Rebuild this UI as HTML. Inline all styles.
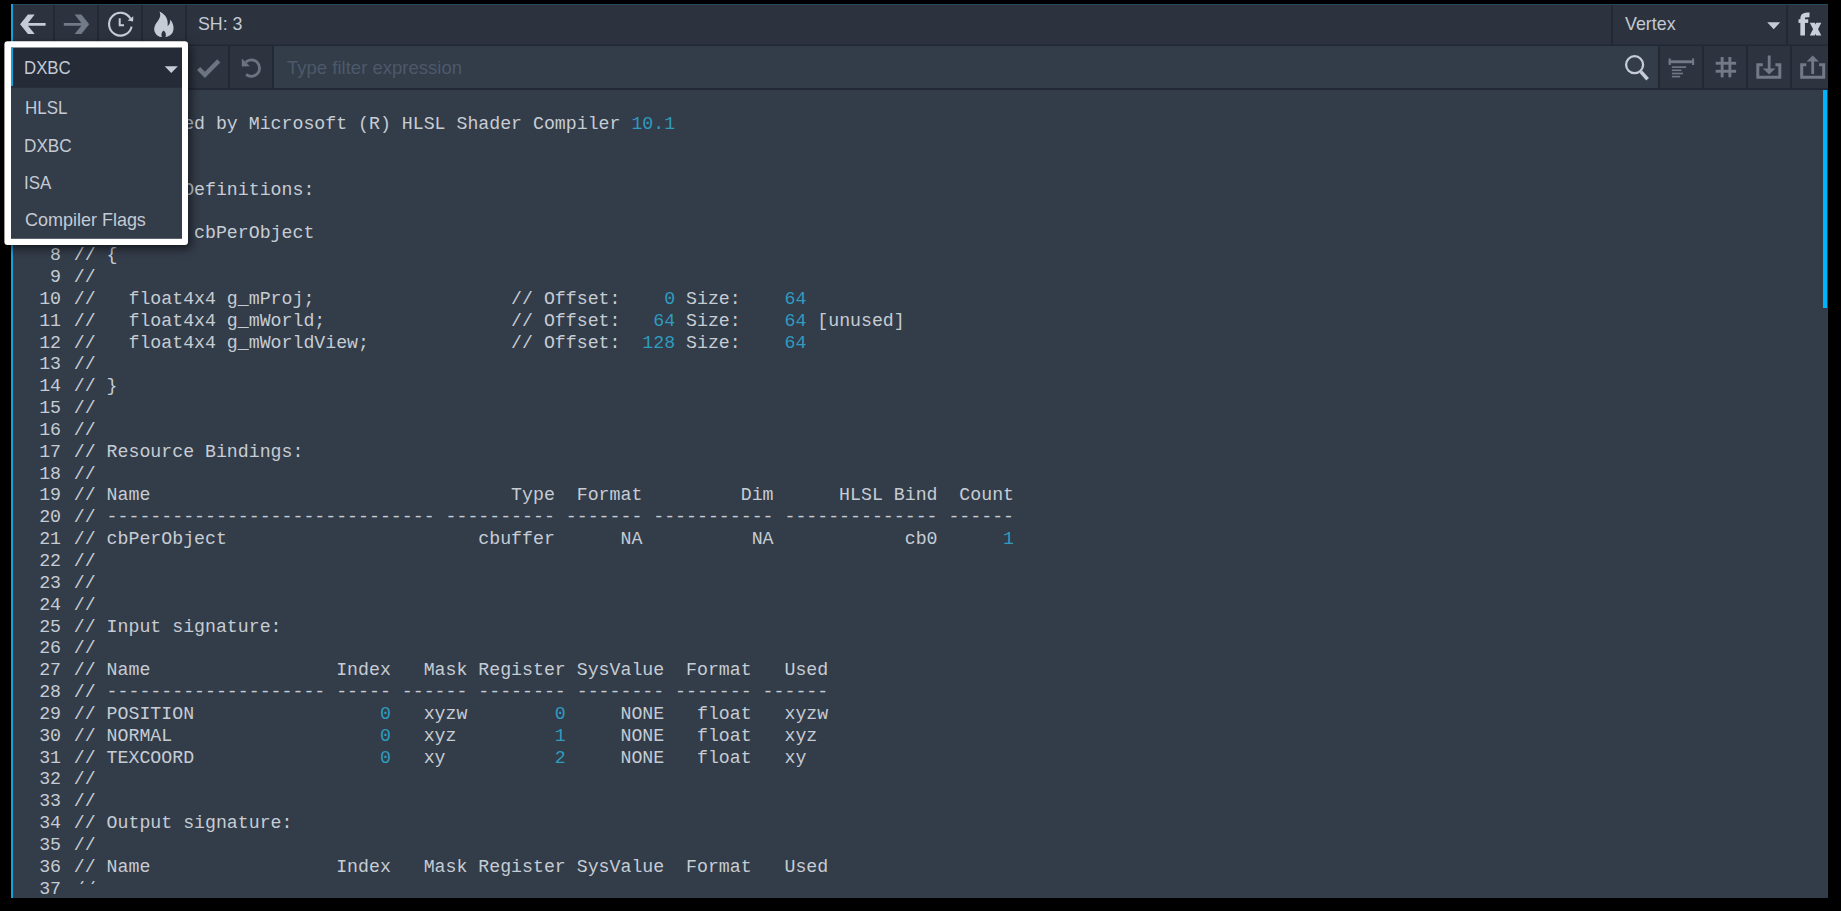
<!DOCTYPE html>
<html><head><meta charset="utf-8"><title>Shader View</title>
<style>
html,body{margin:0;padding:0;background:#000;}
body{width:1841px;height:911px;position:relative;overflow:hidden;font-family:"Liberation Sans",sans-serif;}
.abs{position:absolute;}
#app{left:11px;top:4px;width:1817px;height:894px;background:#333c49;}
#row1{left:11px;top:4px;width:1817px;height:41px;background:#2c333f;border-top:1px solid #24495c;box-sizing:border-box;}
#row1t{left:11px;top:5px;width:1817px;height:1px;background:#302f3a;}
#row1c{left:11px;top:44px;width:1817px;height:1px;background:#272d38;}
#row1b{left:11px;top:45px;width:1817px;height:1px;background:#222934;}
#row2{left:11px;top:46px;width:1817px;height:42px;background:#2d3440;}
#filter{left:274px;top:46px;width:1384px;height:42px;background:#333c49;}
#row2b{left:11px;top:88px;width:1817px;height:2px;background:#232a35;}
.sep{position:absolute;width:2px;background:#222934;}
.s1{top:5px;height:40px;}
.s2{top:46px;height:42px;}
.ui{position:absolute;color:#c3cad4;font-size:19px;line-height:22px;white-space:pre;transform-origin:0 50%;}
#code{left:11px;top:90px;width:1817px;height:808px;background:#333c49;overflow:hidden;}
pre{margin:0;font-family:"Liberation Mono",monospace;font-size:18.23px;line-height:21.85px;color:#c6ccd4;position:absolute;}
#nums{left:0;width:50px;text-align:right;top:2.3px;}
#src{left:62.8px;top:2.3px;}
#src i{font-style:normal;color:#2f9bbf;}
#hcover{left:60px;top:794px;width:1757px;height:14px;background:#333c49;}
#vscroll{left:1812px;top:0;width:4px;height:218px;background:#00b4fc;}
#stripe{left:11px;top:4px;width:2px;height:894px;background:#18a0dc;}
#shadow{left:5px;top:43px;width:182px;height:201px;border-radius:3px;box-shadow:2px 3px 8px 2px rgba(0,0,0,0.55);}
#icons{left:0;top:0;}
</style></head><body>
<div id="app" class="abs"></div>
<div id="code" class="abs">
  <pre id="nums">1
2
3
4
5
6
7
8
9
10
11
12
13
14
15
16
17
18
19
20
21
22
23
24
25
26
27
28
29
30
31
32
33
34
35
36
37</pre>
  <pre id="src">//
// Generated by Microsoft (R) HLSL Shader Compiler <i>10.1</i>
//
//
// Buffer Definitions: 
//
// cbuffer cbPerObject
// {
//
//   float4x4 g_mProj;                  // Offset:    <i>0</i> Size:    <i>64</i>
//   float4x4 g_mWorld;                 // Offset:   <i>64</i> Size:    <i>64</i> [unused]
//   float4x4 g_mWorldView;             // Offset:  <i>128</i> Size:    <i>64</i>
//
// }
//
//
// Resource Bindings:
//
// Name                                 Type  Format         Dim      HLSL Bind  Count
// ------------------------------ ---------- ------- ----------- -------------- ------
// cbPerObject                       cbuffer      NA          NA            cb0      <i>1</i>
//
//
//
// Input signature:
//
// Name                 Index   Mask Register SysValue  Format   Used
// -------------------- ----- ------ -------- -------- ------- ------
// POSITION                 <i>0</i>   xyzw        <i>0</i>     NONE   float   xyzw
// NORMAL                   <i>0</i>   xyz         <i>1</i>     NONE   float   xyz
// TEXCOORD                 <i>0</i>   xy          <i>2</i>     NONE   float   xy
//
//
// Output signature:
//
// Name                 Index   Mask Register SysValue  Format   Used
//</pre>
  <div id="hcover" class="abs"></div>
  <div id="vscroll" class="abs"></div>
</div>
<div id="row1" class="abs"></div>
<div id="row1t" class="abs"></div>
<div id="row1c" class="abs"></div>
<div id="row1b" class="abs"></div>
<div id="row2" class="abs"></div>
<div id="filter" class="abs"></div>
<div id="row2b" class="abs"></div>
<div class="sep s1" style="left:53px"></div>
<div class="sep s1" style="left:97px"></div>
<div class="sep s1" style="left:141px"></div>
<div class="sep s1" style="left:185px"></div>
<div class="sep s1" style="left:1611px"></div>
<div class="sep s1" style="left:1786px"></div>
<div class="sep s2" style="left:228px"></div>
<div class="sep s2" style="left:272px"></div>
<div class="sep s2" style="left:1658px"></div>
<div class="sep s2" style="left:1702px"></div>
<div class="sep s2" style="left:1746px"></div>
<div class="sep s2" style="left:1790px"></div>
<div id="stripe" class="abs"></div>
<div class="ui" id="t_sh" style="left:198.2px;top:13px;transform:scaleX(0.937);">SH: 3</div>
<div class="ui" id="t_vertex" style="left:1625.4px;top:13px;transform:scaleX(0.939);">Vertex</div>
<div class="ui" id="t_filter" style="left:287px;top:57px;transform:scaleX(0.975);color:#4d596a;">Type filter expression</div>
<div id="shadow" class="abs"></div>
<svg id="popup" class="abs" style="left:0;top:0" width="200" height="260" viewBox="0 0 200 260">
<rect x="4.4" y="41.3" width="183.6" height="203.7" rx="3.2" fill="#fff"/>
<rect x="11" y="47.7" width="171" height="191.1" fill="#333c49"/>
<rect x="11" y="47.7" width="171" height="40" fill="#252b37"/>
<rect x="11" y="47.7" width="2" height="38.4" fill="#18a0dc"/>
</svg>
<div class="ui" id="t_dxbc" style="left:23.8px;top:56.5px;transform:scaleX(0.885);">DXBC</div>
<div class="ui" id="t_hlsl" style="left:24.5px;top:97px;transform:scaleX(0.893);">HLSL</div>
<div class="ui" id="t_dxbc2" style="left:24.3px;top:134.5px;transform:scaleX(0.903);">DXBC</div>
<div class="ui" id="t_isa" style="left:24.3px;top:172px;transform:scaleX(0.893);">ISA</div>
<div class="ui" id="t_cf" style="left:24.5px;top:209.3px;transform:scaleX(0.946);">Compiler Flags</div>
<svg id="icons" class="abs" width="1841" height="911" viewBox="0 0 1841 911">
<g fill="#c5ccd6">
<!-- back arrow -->
<path d="M20.1 24.3 L27.9 14.6 L34.7 14.6 L28.0 22.9 L45.6 22.9 L45.6 25.7 L28.0 25.7 L34.7 34.1 L27.9 34.1 Z"/>
<!-- flame -->
<path d="M159.5 11.6 C166 14.5 168.5 20 167.6 26.2 C169.6 24.8 170.4 22.4 170.2 19.6 C173.4 23.2 174.6 28.6 172.6 32.6 C171.2 35.2 168.6 36.8 165.4 37.1 C166.6 34.6 165.6 32 163.6 30.6 C161.6 32 160.8 34.6 162 37.1 C158.4 36.8 155.6 34.6 154.6 31.4 C153.4 27.4 155.6 23.6 158.2 20.4 C160.2 17.8 161 15 159.5 11.6 Z"/>
<!-- dropdown triangles -->
<path d="M164.7 66.2 L177.8 66.2 L171.25 73 Z"/>
<path d="M1767.2 22.2 L1780.2 22.2 L1773.7 29.2 Z"/>
</g>
<!-- forward arrow -->
<path fill="#727a87" d="M89.2 24.3 L81.4 14.6 L74.6 14.6 L81.3 22.9 L63.8 22.9 L63.8 25.7 L81.3 25.7 L74.6 34.1 L81.4 34.1 Z"/>
<!-- clock -->
<g fill="none" stroke="#c5ccd6" stroke-width="2.1">
<path d="M131.6 26.6 A11.4 11.4 0 1 1 130.4 18.6"/>
<path d="M119.7 18.2 L119.7 25.2 L124 25.2" stroke-width="2"/>
</g>
<path fill="#c5ccd6" d="M133.3 16.2 L133.1 21.4 L127.6 20.5 Z"/>
<!-- check -->
<path fill="none" stroke="#6c7481" stroke-width="4.4" d="M198.6 68.5 L204.9 74.9 L218.8 60.9"/>
<!-- undo -->
<path fill="none" stroke="#6c7481" stroke-width="2.8" d="M245.8 62.1 A8.2 8.2 0 1 1 246.1 74.4"/>
<path fill="#6c7481" d="M241.8 58.6 L249.9 66.3 L241.8 66.6 Z"/>
<!-- search -->
<circle cx="1634.6" cy="64.7" r="8.5" fill="none" stroke="#c5ccd6" stroke-width="2.3"/>
<path d="M1640.8 71.6 L1647.6 79.2" stroke="#c5ccd6" stroke-width="3.6" fill="none"/>
<!-- format -->
<g fill="#727a87">
<rect x="1668.7" y="60.3" width="25.4" height="2.9"/>
<rect x="1668.7" y="58.4" width="2" height="6.6"/>
<rect x="1692.1" y="58.4" width="2" height="6.6"/>
<rect x="1671.9" y="66.3" width="14.2" height="1.6"/>
<rect x="1671.9" y="69.5" width="9.5" height="1.6"/>
<rect x="1671.9" y="72.7" width="11.1" height="1.6"/>
<rect x="1671.9" y="75.8" width="8.2" height="1.6"/>
<!-- hash -->
<rect x="1720.7" y="57" width="2.9" height="20.3"/>
<rect x="1728.4" y="57" width="2.9" height="20.3"/>
<rect x="1715.7" y="61.8" width="20.4" height="2.9"/>
<rect x="1715.7" y="69.8" width="20.4" height="2.9"/>
<!-- download -->
<path d="M1756.3 63.3 H1762.8 V66.3 H1759.3 V75.8 H1778.3 V66.3 H1775.4 V63.3 H1781.3 V78.8 H1756.3 Z"/>
<rect x="1767.8" y="55.5" width="2.8" height="14"/>
<path d="M1762.8 68.5 H1775.4 L1769.1 74.4 Z"/>
<!-- upload -->
<path d="M1800.2 63.3 H1806.3 V66.3 H1803.2 V75.8 H1822.2 V66.3 H1819.1 V63.3 H1825.2 V78.8 H1800.2 Z"/>
<rect x="1811.3" y="60.5" width="2.8" height="13.5"/>
<path d="M1806.6 61.4 H1818.8 L1812.7 55.4 Z"/>
</g>
<!-- fx -->
<g fill="#c9d0da">
<path d="M1802.65 35.6 V18.6 C1802.65 15.6 1804.4 14.7 1809.5 14.9" fill="none" stroke="#c9d0da" stroke-width="4.6"/>
<rect x="1798.5" y="19.3" width="9.7" height="3.6"/>
<path d="M1809.8 22.7 H1814.8 L1821.3 35.6 H1816.3 Z"/>
<path d="M1816.3 22.7 H1821.3 L1814.8 35.6 H1809.8 Z"/>
</g>

</svg>
</body></html>
